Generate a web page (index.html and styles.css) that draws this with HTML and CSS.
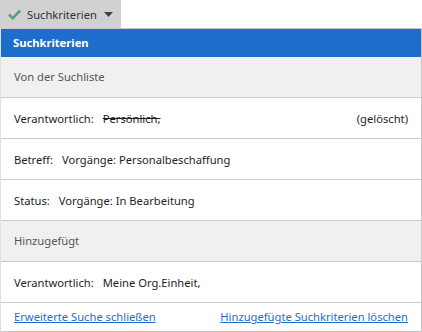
FILE: index.html
```html
<!DOCTYPE html>
<html lang="de">
<head>
  <meta charset="UTF-8" />
  <title>Suchkriterien</title>
  <link rel="stylesheet" href="styles.css">
</head>
<body>
  <button class="toggle" type="button">
    <svg class="check" width="13" height="11" viewBox="0 0 13 11"><path d="M1 5.5 L4.8 9.3 L12 1.5" fill="none" stroke="#5aa07c" stroke-width="2.6"/></svg>
    <span>Suchkriterien</span>
    <svg class="caret" width="9" height="5" viewBox="0 0 9 5"><path d="M0 0 H9 L4.5 5 Z" fill="#444"/></svg>
  </button>

  <div class="panel">
    <div class="panel-title">Suchkriterien</div>

    <div class="group">Von der Suchliste</div>
    <div class="row">
      <span class="label">Verantwortlich:</span>
      <span class="value removed">Persönlich,</span>
      <span class="note">(gelöscht)</span>
    </div>
    <div class="row">
      <span class="label">Betreff:</span>
      <span class="value">Vorgänge: Personalbeschaffung</span>
    </div>
    <div class="row">
      <span class="label">Status:</span>
      <span class="value">Vorgänge: In Bearbeitung</span>
    </div>

    <div class="group">Hinzugefügt</div>
    <div class="row">
      <span class="label">Verantwortlich:</span>
      <span class="value">Meine Org.Einheit,</span>
    </div>

    <div class="actions">
      <a href="#">Erweiterte Suche schließen</a>
      <a href="#">Hinzugefügte Suchkriterien löschen</a>
    </div>
  </div>
</body>
</html>
```

FILE: styles.css
```css
body {
  margin: 0;
  font-family: "Noto Sans", "Open Sans", sans-serif;
  font-size: 11.2px;
  color: #1e1e1e;
  background: #fff;
}
.toggle {
  display: flex;
  align-items: center;
  gap: 6px;
  width: 121px;
  height: 28px;
  padding: 0 0 0 8px;
  border: none;
  background: #d1d1d1;
  font: inherit;
  color: #333;
}
.caret {
  margin-left: 1px;
}
.panel {
  border: 1px solid #c8c8c8;
  border-left-color: #e0e0e0;
}
.panel-title {
  height: 28px;
  line-height: 28px;
  padding: 0 12px;
  background: #1f6dcb;
  color: #fff;
  font-weight: bold;
}
.group {
  height: 40px;
  line-height: 40px;
  padding: 0 13px;
  background: #f0f0f0;
  color: #555;
  border-bottom: 1px solid #cbcbcb;
}
.row {
  display: flex;
  align-items: center;
  gap: 9px;
  height: 40px;
  padding: 0 13px;
  border-bottom: 1px solid #cbcbcb;
}
.removed {
  text-decoration: line-through;
}
.note {
  margin-left: auto;
}
.actions {
  display: flex;
  justify-content: space-between;
  height: 28px;
  line-height: 28px;
  padding: 0 13px;
}
.actions a {
  color: #1a6fd0;
}
```
